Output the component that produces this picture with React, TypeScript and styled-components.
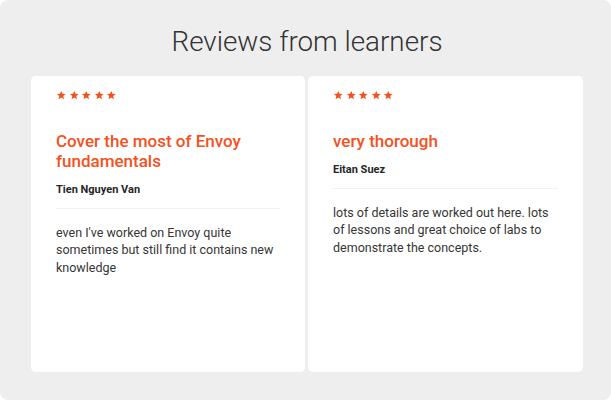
import React from 'react';
import styled, { createGlobalStyle } from 'styled-components';

const GlobalStyle = createGlobalStyle`
  html, body {
    margin: 0;
    padding: 0;
    background: #fff;
  }
  * {
    box-sizing: border-box;
  }
`;

const Panel = styled.section`
  height: 400px;
  background: #eeeeee;
  border-radius: 8px;
  padding: 25px 28px 28px 31px;
  font-family: Roboto, 'Liberation Sans', sans-serif;
  display: flex;
  flex-direction: column;
`;

const Heading = styled.h2`
  margin: 0 0 18px;
  font-size: 27.8px;
  line-height: 33px;
  font-weight: 300;
  color: #333;
  text-align: center;
`;

const Cards = styled.div`
  display: grid;
  grid-template-columns: 274px 275px;
  gap: 3px;
  flex: 1;
`;

const Card = styled.article`
  background: #fff;
  border-radius: 5px;
  padding: 14px 25px 0;
  display: flex;
  flex-direction: column;
`;

const Stars = styled.div`
  display: flex;
  gap: 2px;
  height: 10.5px;
  margin-bottom: 30px;
`;

const Title = styled.h3`
  margin: 0;
  font-size: 17px;
  line-height: 20px;
  font-weight: 500;
  color: #f4511e;
`;

const Author = styled.div`
  margin: 12px 0 12px;
  font-size: 11px;
  line-height: 13px;
  font-weight: 700;
  color: #262626;
`;

const Divider = styled.hr`
  margin: 0 0 15px;
  border: 0;
  border-top: 1px solid #f2f2f2;
`;

const Body = styled.p`
  margin: 0;
  font-size: 12.5px;
  line-height: 17.5px;
  color: #363636;
`;

const Star = () => (
  <svg width="10.5" height="10.5" viewBox="0 0 24 24">
    <path
      fill="#f4511e"
      d="M12 17.27L18.18 21l-1.64-7.03L22 9.24l-7.19-.61L12 2 9.19 8.63 2 9.24l5.46 4.73L5.82 21z"
    />
  </svg>
);

const reviews = [
  {
    title: 'Cover the most of Envoy fundamentals',
    author: 'Tien Nguyen Van',
    text: "even I've worked on Envoy quite sometimes but still find it contains new knowledge",
  },
  {
    title: 'very thorough',
    author: 'Eitan Suez',
    text: 'lots of details are worked out here. lots of lessons and great choice of labs to demonstrate the concepts.',
  },
];

export default function App() {
  return (
    <>
      <GlobalStyle />
      <Panel>
        <Heading>Reviews from learners</Heading>
        <Cards>
          {reviews.map((r) => (
            <Card key={r.author}>
              <Stars>
                {[0, 1, 2, 3, 4].map((i) => (
                  <Star key={i} />
                ))}
              </Stars>
              <Title>{r.title}</Title>
              <Author>{r.author}</Author>
              <Divider />
              <Body>{r.text}</Body>
            </Card>
          ))}
        </Cards>
      </Panel>
    </>
  );
}
